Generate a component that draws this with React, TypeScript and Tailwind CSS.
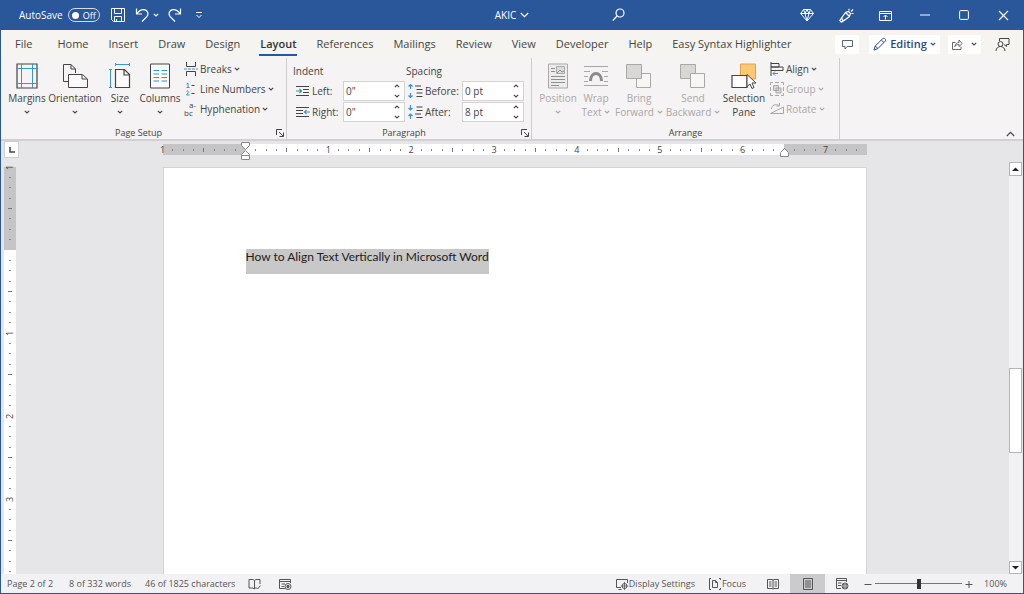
import React from 'react';

const TABS = ['File', 'Home', 'Insert', 'Draw', 'Design', 'Layout', 'References', 'Mailings', 'Review', 'View', 'Developer', 'Help', 'Easy Syntax Highlighter'];

type IconProps = { children: React.ReactNode; w?: number; h?: number; className?: string };

const Icon = ({ children, w = 16, h = 16, className = '' }: IconProps) => (
    <svg width={w} height={h} viewBox={`0 0 ${w} ${h}`} fill="none" stroke="currentColor" className={`shrink-0 ${className}`} aria-hidden="true">
        {children}
    </svg>
);

const Chevron = ({ className = '' }: { className?: string }) => (
    <Icon w={6} h={4} className={className}>
        <path d="M.8 .8 3 3 5.2 .8" strokeWidth="1.1" />
    </Icon>
);

/* TITLE BAR */
const TitleBar = () => (
    <header className="grid h-[30px] shrink-0 grid-cols-[1fr_auto_1fr] items-center bg-[#2a579a] text-[10px] text-white">
        <div className="flex items-center pl-[18px]">
            <label htmlFor="autosave">AutoSave</label>
            <button id="autosave" role="switch" aria-checked="false" className="ml-[5px] flex h-[14px] w-8 items-center gap-1 rounded-full border border-white/80 px-[3px] text-[9px] leading-none">
                <span className="size-[7px] rounded-full bg-white" />
                Off
            </button>
            <button aria-label="Save" className="ml-[10px]">
                <Icon>
                    <path d="M1.5 1.5h13v13h-11l-2-2zM4.500 1.500v5h7v-5M4.500 14.500v-5h7v5M6.500 14v-2" />
                </Icon>
            </button>
            <button aria-label="Undo" className="ml-[9px]">
                <Icon w={14}>
                    <path d="M1.500 1.500v5.500h5.500M1.800 6.800C4 3.500 6.500 2.500 9 2.600c3.800.3 5 4.300 2.800 7L7 14.500" strokeWidth="1.2" />
                </Icon>
            </button>
            <button aria-label="Undo options" className="ml-1"><Chevron /></button>
            <button aria-label="Redo" className="ml-[9px]">
                <Icon w={14}>
                    <path d="M12.500 1.500v5.500H7M12.200 6.800C10 3.500 7.500 2.500 5 2.600c-3.800.3-5 4.300-2.800 7L7 14.500" strokeWidth="1.2" />
                </Icon>
            </button>
            <button aria-label="Customize toolbar" className="ml-[13px]">
                <Icon w={8} h={8}>
                    <path d="M1 1.500h6M1.500 4 4 6.500 6.500 4" />
                </Icon>
            </button>
        </div>
        <button className="flex items-center gap-1">
            AKIC
            <Icon w={9} h={6}>
                <path d="M.8 1 4.500 4.700 8.200 1" strokeWidth="1.1" />
            </Icon>
        </button>
        <div className="flex items-center justify-between pl-[83px] pr-[14px]">
            <button aria-label="Search">
                <Icon w={13} h={14}>
                    <circle cx="8" cy="5" r="4" strokeWidth="1.2" />
                    <path d="M5 8 .8 12.700" strokeWidth="1.2" />
                </Icon>
            </button>
            <div className="flex items-center gap-[25px]">
                <button aria-label="Premium">
                    <Icon w={14} h={14}>
                        <path d="M3.500 1.500h7l3 4L7 13 .7 5.500zM.7 5.500h12.600M3.500 1.500 5 5.500 7 13l2-7.500 1.500-4M5 5.500 7 1.500l2 4" />
                    </Icon>
                </button>
                <button aria-label="Coming soon">
                    <Icon w={15} h={15}>
                        <path d="M6.500 4.500 10.500 8.500M6.500 4.500.8 12.500l1.700 1.700 8-5.700 1-3-2-2zM3 10.500c.5 2 1.500 2.500 3 1.500M10 2.500V.8M12 3.500 14 1.500M12.500 5.500h2" strokeWidth="1.2" />
                    </Icon>
                </button>
                <button aria-label="Ribbon display options">
                    <Icon w={13} h={11}>
                        <path d="M.5 1.500h12v9H.5zM.5 3.500h12M6.500 9.500V5.500M4.500 7l2-2 2 2" />
                    </Icon>
                </button>
                <button aria-label="Minimize" className="ml-[3px]">
                    <Icon w={10} h={10}><path d="M0 5h10" /></Icon>
                </button>
                <button aria-label="Maximize" className="ml-1">
                    <Icon w={10} h={10}><rect x=".6" y=".6" width="8.800" height="8.800" rx="1" /></Icon>
                </button>
                <button aria-label="Close" className="ml-1">
                    <Icon w={11} h={11}><path d="m1 1 9 9M10 1l-9 9" strokeWidth="1.1" /></Icon>
                </button>
            </div>
        </div>
    </header>
);

/* TABS */
const TabRow = () => (
    <div className="flex h-7 shrink-0 items-center bg-[#f5f4f1] pl-[14px] pr-[13px] text-[11px] text-[#444]">
        <nav className="flex items-center gap-[20px]">
            {TABS.map((tab) => (
                <button
                    key={tab}
                    className={`-ml-px whitespace-nowrap border-b-2 pl-px leading-[21px] ${tab === 'File' ? 'mr-[5px]' : ''} ${tab === 'Layout' ? 'border-[#2a579a] font-semibold text-[#333]' : 'border-transparent'}`}
                >
                    {tab}
                </button>
            ))}
        </nav>
        <div className="ml-auto flex items-center">
            <button aria-label="Comments" className="flex h-[19px] w-6 items-center justify-center bg-white text-[#5a6478]">
                <Icon w={11} h={11}><path d="M.5 1.500h10v6H5l-2 2.500V7.500H.5z" /></Icon>
            </button>
            <button className="ml-[10px] flex h-[19px] w-[71px] items-center justify-center gap-[3px] bg-white font-semibold text-[#2b478b]">
                <Icon w={14} h={14}>
                    <path d="M1 13 2.200 9 9.500 1.800c1.700-1.500 4 .6 2.600 2.400L5 11.500zM8.300 3l2.700 2.600M2.200 9 5 11.500" />
                </Icon>
                Editing
                <Chevron />
            </button>
            <button aria-label="Share" className="ml-2 flex h-[19px] w-[33px] items-center justify-center gap-2 bg-white">
                <Icon w={11} h={11}>
                    <path d="M3.500 3.500h-3v7h8.500V7.500M2.800 7.500C3.500 4.500 5 3.500 7 3.500V1l3.200 3.500L7 7.500V5.500C5 5.500 4 6 2.800 7.500z" strokeWidth=".8" />
                </Icon>
                <Chevron />
            </button>
            <button aria-label="Present" className="ml-[14px]">
                <Icon w={15} h={15}>
                    <path d="M4.500 4V1.500h9.500v6h-2.500v2L9 7.500" />
                    <circle cx="5.500" cy="7" r="2.500" />
                    <path d="M1 14c0-6 9-6 9 0" />
                </Icon>
            </button>
        </div>
    </div>
);

/* RIBBON PARTS */
type BigProps = { label: string; second?: string; icon: React.ReactNode; width: string; chevron?: boolean; disabled?: boolean };

const BigButton = ({ label, second = '', icon, width, chevron = true, disabled = false }: BigProps) => (
    <button disabled={disabled} className={`flex shrink-0 flex-col items-center pt-[2px] leading-[14px] ${width} ${disabled ? 'text-[#a9a8a7]' : 'text-[#444]'}`}>
        <span className="flex h-[30px] items-center">{icon}</span>
        <span>{label}</span>
        <span className="flex h-[14px] items-center gap-[3px]">
            {second}
            {chevron && <Chevron />}
        </span>
    </button>
);

const SmallButton = ({ label, icon, disabled = false }: { label: string; icon: React.ReactNode; disabled?: boolean }) => (
    <button disabled={disabled} className={`flex h-5 items-center gap-[2px] whitespace-nowrap ${disabled ? 'text-[#a9a8a7]' : 'text-[#444]'}`}>
        {icon}
        {label}
        <Chevron />
    </button>
);

type SpinProps = { id: string; label: string; value: string; icon: React.ReactNode; labelWidth: string };

const SpinField = ({ id, label, value, icon, labelWidth }: SpinProps) => (
    <div className="flex items-center text-[#444]">
        {icon}
        <label htmlFor={id} className={`ml-[2px] ${labelWidth}`}>{label}</label>
        <div className="flex h-5 w-[62px] items-center border border-[#d5d3d2] bg-white">
            <input id={id} defaultValue={value} className="min-w-0 flex-1 bg-transparent pl-[2px] outline-none" />
            <span className="flex flex-col gap-[6px] pr-1">
                <button aria-label={`Increase ${label}`}><Chevron className="block rotate-180" /></button>
                <button aria-label={`Decrease ${label}`}><Chevron className="block" /></button>
            </span>
        </div>
    </div>
);

const GroupFooter = ({ label, launcher = true }: { label: string; launcher?: boolean }) => (
    <div className="mt-auto flex h-[13px] items-center text-[9px] text-[#444]">
        <span className="flex-1 text-center">{label}</span>
        {launcher && (
            <button aria-label={`${label} settings`} className="mr-[2px]">
                <Icon w={8} h={8}><path d="M.5 6V.5H6M3 3l4 4M7.500 3.500v4h-4" /></Icon>
            </button>
        )}
    </div>
);

const MarginsIcon = () => (
    <Icon w={22} h={26}>
        <path d="M1 1h20v24H1z" strokeWidth="1.200" />
        <path d="M5.500 1v24M16.500 1v24M1 5.500h20M1 20.500h20" stroke="#3a94cf" />
    </Icon>
);

const OrientationIcon = () => (
    <Icon w={26} h={26}>
        <path d="M6 18.500H1.500V1.500h7.500L13.500 6V10M9 1.500V6h4.500" />
        <path d="M6.500 11.500h14l5 4.500v8.500h-19zM20 11.500V16h5" fill="#fbfafa" />
    </Icon>
);

const SizeIcon = () => (
    <Icon w={22} h={26}>
        <path d="M6.500 6.500h9l5 5v13h-14zM15 6.500v5.500h5.500" fill="#fbfafa" strokeWidth="1.200" />
        <path d="M6 1.500h15M6.500 0v3M20.500 0v3M1.500 6v19M0 6.500h3M0 24.500h3" stroke="#3a94cf" />
    </Icon>
);

const ColumnsIcon = () => (
    <Icon w={20} h={26}>
        <path d="M.5 1h19v24H.5z" fill="#fbfafa" />
        <path d="M3.500 7.500h5.500M3.500 11h5.500M3.500 14.500h5.500M3.500 18h5.500M11.500 7.500H17M11.500 11H17M11.500 14.500H17M11.500 18H17" stroke="#3a94cf" />
    </Icon>
);

const BreaksIcon = () => (
    <Icon w={14} h={14}>
        <path d="M2.500 0v4.500h9V0M2.500 14V9.500h9V14" />
        <path d="M0 7h14" stroke="#3a94cf" strokeDasharray="3 1" />
    </Icon>
);

const LineNumbersIcon = () => (
    <Icon w={14} h={14}>
        <path d="M2.500 2 4 1v4.500M2.500 5.500h3M2.500 9.500c1-1.500 2.500 0 1.500 1.500l-1.500 2h3" stroke="#3a94cf" />
        <path d="M7.500 3.500H10.500M7.500 11.500H10.500" />
    </Icon>
);

const HyphenIcon = () => (
    <span className="flex w-[14px] shrink-0 flex-col items-start text-[8px] leading-[8px]" aria-hidden="true">
        <span className="pl-[5px]">a-</span>
        <span>bc</span>
    </span>
);

const IndentIcon = ({ right = false }: { right?: boolean }) => (
    <Icon w={14} h={12}>
        <path d={right ? 'M0 1.500h13M0 4.500h7M0 7.500h7M0 10.500h13' : 'M0 1.500h13M7 4.500h6M7 7.500h6M0 10.500h13'} />
        <path d={right ? 'M14 6H8.500M10.500 4l-2 2 2 2' : 'M0 6h5.500M3.500 4l2 2-2 2'} stroke={right ? '#3a94cf' : '#2e9c86'} strokeWidth="1.200" />
    </Icon>
);

const SpacingIcon = ({ after = false }: { after?: boolean }) => (
    <Icon w={15} h={14}>
        <path d={after ? 'M2.500 0v5M.5 3l2 2 2-2M2.500 14V9M.5 11l2-2 2 2' : 'M2.500 5V.5M.5 2.500l2-2 2 2M2.500 9v4.500M.5 11.500l2 2 2-2'} stroke="#3a94cf" strokeWidth="1.200" />
        <path d={after ? 'M8.500 2h6M8.500 5.500h6M7 9h6M8.500 12.500h6' : 'M7 2h6M8.500 5.500h6M8.500 9h6M8.500 12.500h6'} />
    </Icon>
);

const PositionIcon = () => (
    <Icon w={20} h={26}>
        <path d="M.5 1h19v24H.5z" fill="#ececec" />
        <path d="M8.500 3.500h8v7h-8z" fill="#dcdcdc" />
        <path d="M9 10l3-3 2 2 2-1M3 5.500h4M3 8.500h4M3 13.500h14M3 16.500h14M3 19.500h14M3 22.500h8" stroke="#8f8f8f" />
    </Icon>
);

const WrapIcon = () => (
    <Icon w={24} h={24}>
        <path d="M0 2.500h24M0 7.500h6M18 7.500h6M0 12.500h4M20 12.500h4M0 17.500h4M20 17.500h4M0 21.500h24" />
        <path d="M6.500 17c0-10 11-10 11 0" strokeWidth="3" stroke="#8a8a8a" />
    </Icon>
);

const LayersIcon = ({ back = false }: { back?: boolean }) => (
    <Icon w={26} h={26}>
        {back && <path d="M.5 1.500h15v14H.5z" fill="#d8d7d6" />}
        <path d="M10.500 10.500h14v14h-14z" fill="#f7f6f5" />
        {!back && <path d="M.5 1.500h15v14H.5z" fill="#d8d7d6" />}
    </Icon>
);

const SelectionIcon = () => (
    <Icon w={26} h={26}>
        <path d="M9.500 1h15v15h-15z" fill="#fbc876" stroke="#e3a246" />
        <path d="M1 12.500h15v12H1z" fill="#fff" strokeWidth="1.200" />
        <path d="M16 11.500v12l3-2.500 2 4.500 2-1-2-4.500h4z" fill="#fff" />
    </Icon>
);

const AlignIcon = () => (
    <Icon w={14} h={14}>
        <path d="M1 0v14M1 1.500h8v3.500H1M1 5h12v3.500H1" />
        <path d="M8 11.500H3M5 9.500l-2 2 2 2" stroke="#3a94cf" />
    </Icon>
);

const GroupIcon = () => (
    <Icon w={14} h={14}>
        <path d="M3.500 3.500h5v5h-5zM6 6h5v5H6z" fill="#dcdcdc" />
        <path d="M.5 3V.5H3M11 .5h2.500V3M13.500 11v2.500H11M3 13.500H.5V11M5 .5h4M5 13.500h4M.5 5v4M13.500 5v4" />
    </Icon>
);

const RotateIcon = () => (
    <Icon w={14} h={12}>
        <path d="M1.500 6C1.500 2 6 .5 9 2.500M9.500 0v3h-3M.5 10.500h13V4z" />
    </Icon>
);

const Ribbon = () => (
    <div className="flex h-[83px] shrink-0 border-b-2 border-[#d2d0d1] bg-[#f5f3f3] text-[10px]">
        <section className="flex w-[286px] shrink-0 flex-col border-r border-[#cfcdcc] pt-px">
            <div className="flex pl-[6px]">
                <BigButton label="Margins" icon={<MarginsIcon />} width="w-10" />
                <BigButton label="Orientation" icon={<OrientationIcon />} width="w-14" />
                <BigButton label="Size" icon={<SizeIcon />} width="w-[34px]" />
                <BigButton label="Columns" icon={<ColumnsIcon />} width="w-[46px]" />
                <div className="ml-px">
                    <SmallButton label="Breaks" icon={<BreaksIcon />} />
                    <SmallButton label="Line Numbers" icon={<LineNumbersIcon />} />
                    <SmallButton label="Hyphenation" icon={<HyphenIcon />} />
                </div>
            </div>
            <GroupFooter label="Page Setup" />
        </section>
        <section className="flex w-[245px] shrink-0 flex-col border-r border-[#cfcdcc] pt-px">
            <div className="flex pl-[6px] pt-[2px] text-[#444]">
                <div className="w-[113px]">
                    <h3 className="h-5 leading-5">Indent</h3>
                    <div className="flex flex-col gap-px pl-[3px]">
                        <SpinField id="indent-left" label="Left:" value={'0"'} icon={<IndentIcon />} labelWidth="w-[31px]" />
                        <SpinField id="indent-right" label="Right:" value={'0"'} icon={<IndentIcon right />} labelWidth="w-[31px]" />
                    </div>
                </div>
                <div>
                    <h3 className="h-5 leading-5">Spacing</h3>
                    <div className="flex flex-col gap-px pl-[2px]">
                        <SpinField id="space-before" label="Before:" value="0 pt" icon={<SpacingIcon />} labelWidth="w-[37px]" />
                        <SpinField id="space-after" label="After:" value="8 pt" icon={<SpacingIcon after />} labelWidth="w-[37px]" />
                    </div>
                </div>
            </div>
            <GroupFooter label="Paragraph" />
        </section>
        <section className="flex w-[308px] shrink-0 flex-col border-r border-[#cfcdcc] pt-px">
            <div className="flex pl-1">
                <BigButton label="Position" icon={<PositionIcon />} width="w-11" disabled />
                <BigButton label="Wrap" second="Text" icon={<WrapIcon />} width="w-8" disabled />
                <BigButton label="Bring" second="Forward" icon={<LayersIcon />} width="w-[54px]" disabled />
                <BigButton label="Send" second="Backward" icon={<LayersIcon back />} width="w-[54px]" disabled />
                <BigButton label="Selection" second="Pane" icon={<SelectionIcon />} width="w-[48px]" chevron={false} />
                <div className="ml-[2px]">
                    <SmallButton label="Align" icon={<AlignIcon />} />
                    <SmallButton label="Group" icon={<GroupIcon />} disabled />
                    <SmallButton label="Rotate" icon={<RotateIcon />} disabled />
                </div>
            </div>
            <GroupFooter label="Arrange" launcher={false} />
        </section>
        <button aria-label="Collapse ribbon" className="mb-[2px] ml-auto mr-2 self-end text-[#444]">
            <Icon w={9} h={6}><path d="M.8 5 4.500 1.300 8.200 5" strokeWidth="1.100" /></Icon>
        </button>
    </div>
);

/* RULERS: one cell per eighth of an inch */
const Mark = ({ index, vertical = false }: { index: number; vertical?: boolean }) => {
    const inch = Math.abs(index - 8) / 8;
    if (inch === 0) return null;
    if (index % 8 === 0) return <span className={vertical ? '-rotate-90' : ''}>{inch}</span>;
    if (index % 8 === 4) return <span className={`shrink-0 bg-[#777] ${vertical ? 'h-px w-1' : 'h-1 w-px'}`} />;
    return <span className={`shrink-0 bg-[#888] ${vertical ? 'h-px w-[2px]' : 'h-[2px] w-px'}`} />;
};

const HorizontalRuler = () => (
    <div className="relative flex h-[11px] w-[704px] shrink-0 text-[9px] leading-none text-[#444]">
        {Array.from({ length: 68 }, (_, i) => (
            <span key={i} className={`flex flex-1 ${i < 8 || i >= 60 ? 'bg-[#c6c5c6]' : 'bg-white'}`}>
                <span className="relative flex w-0 items-center justify-center"><Mark index={i} /></span>
            </span>
        ))}
        {/* indent markers sit over the ruler edges */}
        <Icon w={9} h={18} className="absolute -top-[2px] left-[78px] text-[#8a8a8a]">
            <path d="M.5 .5h8v3l-4 4-4-4zM.5 12.500l4-4 4 4v5h-8zM.5 13.500h8" fill="#fff" />
        </Icon>
        <Icon w={9} h={9} className="absolute left-[617px] top-1 text-[#8a8a8a]">
            <path d="M.5 4.500l4-4 4 4v4h-8z" fill="#fff" />
        </Icon>
    </div>
);

const VerticalRuler = () => (
    <div className="mt-[5px] min-h-0 w-3 flex-1 overflow-hidden pt-1 text-[9px] leading-none text-[#444]">
        <div className="min-h-full bg-white">
            {[0, 1, 2, 3, 4].map((block) => (
                <div key={block} className={`flex h-[83px] flex-col ${block === 0 ? 'bg-[#c6c5c6]' : ''}`}>
                    {[0, 1, 2, 3, 4, 5, 6, 7].map((cell) => (
                        <span key={cell} className="flex flex-1 flex-col">
                            <span className="flex h-0 items-center justify-center"><Mark index={block * 8 + cell} vertical /></span>
                        </span>
                    ))}
                </div>
            ))}
        </div>
    </div>
);

const Workspace = () => (
    <main className="flex min-h-0 flex-1 bg-[#e6e5e7]">
        <div className="flex w-[18px] shrink-0 flex-col pl-[3px]">
            <button aria-label="Tab stop" className="flex h-[17px] w-[15px] shrink-0 items-center justify-center border border-[#d0cfd0] bg-white text-[#444]">
                <Icon w={6} h={6}><path d="M1 0v5h5" strokeWidth="1.500" /></Icon>
            </button>
            <VerticalRuler />
        </div>
        <div className="flex min-w-0 flex-1 flex-col items-center overflow-hidden pl-px pt-[3px]">
            <HorizontalRuler />
            <article className="mt-3 w-[704px] shrink-0 grow border border-b-0 border-[#d3d2d4] bg-white px-[82px] pt-[81px]">
                <p className="w-fit bg-[#c8c8c8] pb-[9px] font-[Lato,sans-serif] text-[12px] leading-4 text-[#1c1c1c]">
                    How to Align Text Vertically in Microsoft Word
                </p>
            </article>
        </div>
        {/* vertical scrollbar */}
        <div className="mr-px mt-[21px] flex w-[13px] shrink-0 flex-col bg-[#f2f1f2] text-[#222]">
            <button aria-label="Scroll up" className="flex h-[14px] shrink-0 items-center justify-center border border-[#b5b4b5] bg-white">
                <Icon w={7} h={4}><path d="M0 4 3.500 .5 7 4z" fill="currentColor" stroke="none" /></Icon>
            </button>
            <div className="grow-[192]" />
            <div className="h-[85px] border border-[#b5b4b5] bg-white" />
            <div className="grow-[108]" />
            <button aria-label="Scroll down" className="flex h-[13px] shrink-0 items-center justify-center border border-[#b5b4b5] bg-white">
                <Icon w={7} h={4}><path d="M0 0 3.500 3.500 7 0z" fill="currentColor" stroke="none" /></Icon>
            </button>
        </div>
    </main>
);

/* STATUS BAR */
const StatusBar = () => (
    <footer className="flex h-[19px] shrink-0 items-center whitespace-nowrap bg-[#f2f2f4] pl-[6px] pr-4 text-[9px] text-[#555]">
        <button>Page 2 of 2</button>
        <button className="ml-4">8 of 332 words</button>
        <button className="ml-[14px]">46 of 1825 characters</button>
        <button aria-label="Proofing" className="ml-[13px]">
            <Icon w={13} h={12}>
                <path d="M6.500 2.500v8.500L5 10H1V1.500h4l1.500 1L8 1.500h4V6M6.500 11 8 9.500l1.500 1.500L12.500 7.500" />
            </Icon>
        </button>
        <button aria-label="Macro recording" className="ml-[18px]">
            <Icon w={13} h={12}>
                <path d="M6 10.500H.5V1.500h11V5M.5 3.500h11M2.500 6H6M2.500 8.500h2.500" />
                <circle cx="9" cy="8.500" r="3" />
                <circle cx="9" cy="8.500" r="1.200" fill="currentColor" />
            </Icon>
        </button>
        <button className="ml-auto flex items-center">
            <Icon w={13} h={12}>
                <path d="M5 9.500H.5V1.500h11V5M2.500 11.500h3" />
                <circle cx="8.500" cy="8" r="2.500" />
                <path d="M8.500 4v8M4.800 8h7.500" strokeWidth=".8" />
            </Icon>
            Display Settings
        </button>
        <button className="ml-[14px] flex items-center gap-px">
            <Icon w={12} h={12}>
                <path d="M3.500 2.500h3l2 2v5h-5zM6.500 2.500v2h2M2 .5H.5v11H2M10 .5h1.500V2M10 11.500h1.500V10" />
            </Icon>
            Focus
        </button>
        <button aria-label="Read mode" className="ml-[21px]">
            <Icon w={12} h={12}>
                <path d="M6 2v9M.5 1.500H5l1 .5 1-.5h4.500v9H7l-1 .5-1-.5H.5zM2 4h2.500M2 6h2.500M2 8h2.500M7.500 4H10M7.500 6H10M7.500 8H10" />
            </Icon>
        </button>
        <button aria-label="Print layout" className="ml-[11px] flex h-[19px] w-[35px] items-center justify-center bg-[#cbcacc]">
            <Icon w={10} h={12}>
                <path d="M.5 .5h9v11h-9zM2 3h6M2 5h6M2 7h6M2 9h6" />
            </Icon>
        </button>
        <button aria-label="Web layout" className="ml-[11px]">
            <Icon w={13} h={12}>
                <path d="M5 10.500H.5V.5h10V4M.5 2.500h10M2 5h3.500M2 7.500h3" />
                <circle cx="9" cy="8" r="3" fill="#777" />
                <path d="M9 5v6M6 8h6" stroke="#ddd" strokeWidth=".6" />
            </Icon>
        </button>
        <button aria-label="Zoom out" className="ml-[15px]">
            <Icon w={8} h={8}><path d="M.5 4.500h7" /></Icon>
        </button>
        <input
            type="range"
            aria-label="Zoom"
            min="10"
            max="190"
            defaultValue="100"
            className="mx-[3px] h-[11px] w-[87px] appearance-none bg-[linear-gradient(#777,#777)] bg-[length:100%_1px] bg-center bg-no-repeat [&::-webkit-slider-thumb]:h-[10px] [&::-webkit-slider-thumb]:w-1 [&::-webkit-slider-thumb]:appearance-none [&::-webkit-slider-thumb]:bg-[#333]"
        />
        <button aria-label="Zoom in">
            <Icon w={8} h={8}><path d="M.5 4.500h7M4 1v7" /></Icon>
        </button>
        <button className="ml-[11px]">100%</button>
    </footer>
);

export default function App() {
    return (
        <div className="flex h-screen flex-col overflow-hidden border-x border-b border-[#2a579a] font-['Open_Sans','Noto_Sans',sans-serif]">
            <TitleBar />
            <TabRow />
            <Ribbon />
            <Workspace />
            <StatusBar />
        </div>
    );
}
